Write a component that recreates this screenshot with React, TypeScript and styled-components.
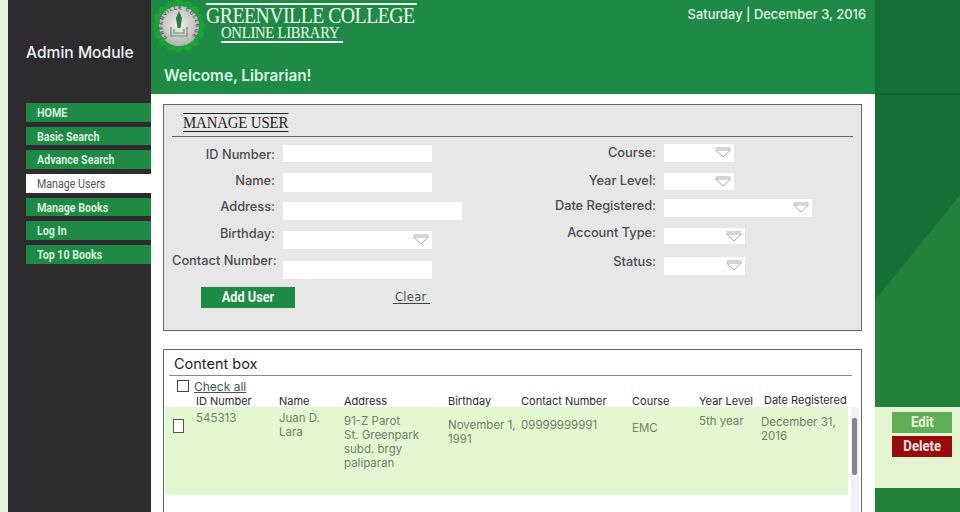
import styled, { createGlobalStyle } from 'styled-components'

const sans = `'Inter', 'Liberation Sans', sans-serif`
const narrow = `'Roboto', 'Liberation Sans', sans-serif`
const serif = `'Liberation Serif', serif`

const GlobalStyle = createGlobalStyle`
  html, body {
    margin: 0;
    padding: 0;
    height: 512px;
    overflow: hidden;
    background: #e6f0df;
  }
`

const NAV_ITEMS = ['HOME', 'Basic Search', 'Advance Search', 'Manage Users', 'Manage Books', 'Log In', 'Top 10 Books']

const LEFT_FIELDS = [
  { label: 'ID Number:', width: 149, height: 17, gap: 0, labelUp: -1 },
  { label: 'Name:', width: 149, height: 19, gap: 11, labelUp: 1 },
  { label: 'Address:', width: 179, height: 18, gap: 10, labelUp: 4 },
  { label: 'Birthday:', width: 149, height: 18, gap: 11, labelUp: 6, select: true },
  { label: 'Contact Number:', width: 149, height: 18, gap: 12, labelUp: 9 },
]

const RIGHT_FIELDS = [
  { label: 'Course:', width: 70, height: 18, gap: 0, labelUp: 0, select: true },
  { label: 'Year Level:', width: 70, height: 17, gap: 11, labelUp: 1, select: true },
  { label: 'Date Registered:', width: 148, height: 18, gap: 9, labelUp: 2, select: true },
  { label: 'Account Type:', width: 81, height: 16, gap: 11, labelUp: 4, select: true },
  { label: 'Status:', width: 81, height: 18, gap: 12, labelUp: 4, select: true },
]

type Field = { label: string; width: number; height: number; gap: number; labelUp: number; select?: boolean }

function Arrow() {
  return (
    <ArrowIcon width="16" height="11" viewBox="0 0 16 11">
      <path d="M0.5 1 H15.5 M0.5 3 H15.5 L8 10 Z" fill="none" stroke="#a9aca9" strokeWidth="1" />
    </ArrowIcon>
  )
}

function FormColumn({ fields, labelWidth, lift = 0 }: { fields: Field[]; labelWidth: number; lift?: number }) {
  return (
    <Column $lift={lift}>
      {fields.map((f) => (
        <FieldRow key={f.label} $gap={f.gap}>
          <FieldLabel $width={labelWidth} $up={f.labelUp}>
            {f.label}
          </FieldLabel>
          <FieldInput $width={f.width} $height={f.height}>
            {f.select && <Arrow />}
          </FieldInput>
        </FieldRow>
      ))}
    </Column>
  )
}

function Logo() {
  const scallops = Array.from({ length: 16 }, (_, i) => {
    const a = (i / 16) * Math.PI * 2
    return { x: 26 + Math.cos(a) * 22, y: 26 + Math.sin(a) * 22 }
  })
  return (
    <LogoIcon width="54" height="54" viewBox="0 0 54 54">
      <defs>
        <radialGradient id="seal" cx="50%" cy="45%" r="55%">
          <stop offset="0%" stopColor="#f1f1ee" />
          <stop offset="100%" stopColor="#aeb2ad" />
        </radialGradient>
        <path id="ring" d="M14.2 37.8 A16.7 16.7 0 1 1 37.8 37.8" />
      </defs>
      {scallops.map((s, i) => (
        <circle key={i} cx={s.x} cy={s.y} r="4.4" fill="#17a534" />
      ))}
      <circle cx="26" cy="26" r="22" fill="#17a534" />
      <circle cx="26" cy="26" r="20.5" fill="url(#seal)" stroke="#3b6a45" strokeWidth="0.6" />
      <text fontFamily="'Liberation Sans', sans-serif" fontSize="5" fontWeight="700" fill="#3e5a46">
        <textPath href="#ring" textLength="76">
          GREENVILLE COLLEGE
        </textPath>
      </text>
      <path d="M18 27 V36 H34 V27 M21 29 V33 H31 V29" fill="none" stroke="#7b9180" strokeWidth="1.2" />
      <path d="M26 11 L29 18 L27.5 28 H24.5 L23 18 Z" fill="#2e7a45" />
    </LogoIcon>
  )
}

export default function App() {
  return (
    <>
      <GlobalStyle />
      <Page>
        <Gutter />
        <Sidebar>
          <ModuleTitle>Admin Module</ModuleTitle>
          <Nav>
            {NAV_ITEMS.map((item) => (
              <NavItem key={item} $active={item === 'Manage Users'}>
                <Squeeze $x={0.82}>{item}</Squeeze>
              </NavItem>
            ))}
          </Nav>
        </Sidebar>
        <Main>
          <Header>
            <BrandRow>
              <Logo />
              <Brand>
                <BrandName>
                  <Squeeze $x={0.84}>GREENVILLE COLLEGE</Squeeze>
                </BrandName>
                <BrandSub>
                  <Squeeze $x={0.89}>ONLINE LIBRARY</Squeeze>
                </BrandSub>
              </Brand>
              <DateText>Saturday | December 3, 2016</DateText>
            </BrandRow>
            <Welcome>Welcome, Librarian!</Welcome>
          </Header>
          <Body>
            <ManagePanel>
              <PanelHeading>
                <PanelTitle>MANAGE USER</PanelTitle>
              </PanelHeading>
              <FormGrid>
                <div>
                  <FormColumn fields={LEFT_FIELDS} labelWidth={111} />
                  <Actions>
                    <AddButton>
                      <Squeeze $x={0.85} $origin="center">
                        Add User
                      </Squeeze>
                    </AddButton>
                    <ClearLink>Clear</ClearLink>
                  </Actions>
                </div>
                <FormColumn fields={RIGHT_FIELDS} labelWidth={155} lift={1} />
              </FormGrid>
            </ManagePanel>
            <ContentPanel>
              <ContentTitle>Content box</ContentTitle>
              <CheckAllRow>
                <CheckBox />
                <CheckAll>Check all</CheckAll>
              </CheckAllRow>
              <TableHead>
                <span>ID Number</span>
                <span>Name</span>
                <span>Address</span>
                <span>Birthday</span>
                <span>Contact Number</span>
                <span>Course</span>
                <span>Year Level</span>
                <HeadCell $up={1}>Date Registered</HeadCell>
              </TableHead>
              <TableArea>
                <TableRow>
                  <RowCheck />
                  <Cell $top={4}>545313</Cell>
                  <Cell $top={4}>
                    Juan D.
                    <br />
                    Lara
                  </Cell>
                  <Cell $top={7}>
                    91-Z Parot
                    <br />
                    St. Greenpark
                    <br />
                    subd. brgy
                    <br />
                    paliparan
                  </Cell>
                  <Cell $top={11}>
                    November 1,
                    <br />
                    1991
                  </Cell>
                  <Cell $top={11}>09999999991</Cell>
                  <Cell $top={14}>EMC</Cell>
                  <Cell $top={7}>5th year</Cell>
                  <Cell $top={8} $shift={-3}>
                    December 31,
                    <br />
                    2016
                  </Cell>
                </TableRow>
                <ScrollTrack>
                  <ScrollThumb />
                </ScrollTrack>
              </TableArea>
            </ContentPanel>
          </Body>
        </Main>
        <RightRail>
          <RailTop />
          <ActionStrip>
            <EditButton>
              <Squeeze $x={0.85} $origin="center">
                Edit
              </Squeeze>
            </EditButton>
            <DeleteButton>
              <Squeeze $x={0.85} $origin="center">
                Delete
              </Squeeze>
            </DeleteButton>
          </ActionStrip>
        </RightRail>
      </Page>
    </>
  )
}

// the reference uses condensed faces that are not installed
const Squeeze = styled.span<{ $x: number; $origin?: string }>`
  display: inline-block;
  transform: scaleX(${(p) => p.$x});
  transform-origin: ${(p) => p.$origin ?? 'left'} center;
  white-space: nowrap;
`

const Page = styled.div`
  display: grid;
  grid-template-columns: 8px 143px 724px 85px;
  width: 960px;
  height: 512px;
  overflow: hidden;
`

const Gutter = styled.div`
  background: #e6f0df;
`

const Sidebar = styled.aside`
  background: #2d2b2d;
  padding-left: 18px;
`

const ModuleTitle = styled.div`
  margin-top: 43px;
  font: 500 15.6px/20px ${sans};
  color: #eef1f4;
  white-space: nowrap;
`

const Nav = styled.nav`
  display: flex;
  flex-direction: column;
  gap: 5.2px;
  margin-top: 40px;
`

const NavItem = styled.div<{ $active?: boolean }>`
  height: 18.5px;
  padding-left: 11px;
  font: ${(p) => (p.$active ? 400 : 700)} 13px/19.5px ${narrow};
  color: ${(p) => (p.$active ? '#555' : '#d8eedd')};
  background: ${(p) => (p.$active ? '#fff' : '#1f8a45')};
`

const Main = styled.main`
  display: flex;
  flex-direction: column;
  background: #fff;
  min-height: 0;
`

const Header = styled.header`
  height: 94px;
  flex: none;
  background: #1f8a45;
`

const BrandRow = styled.div`
  display: flex;
  align-items: flex-start;
  height: 58px;
`

const LogoIcon = styled.svg`
  flex: none;
  margin-left: 2px;
  margin-right: -1px;
`

const Brand = styled.div`
  padding-top: 3px;
  color: #f2fbf3;
`

const BrandName = styled.div`
  width: 211px;
  border-top: 2px solid #f2fbf3;
  font: 400 23.5px/21px ${serif};
  letter-spacing: -0.6px;
`

const BrandSub = styled.div`
  width: 122px;
  height: 16px;
  margin: -1px 0 0 15px;
  border-bottom: 2px solid #f2fbf3;
  font: 400 16.5px/16px ${serif};
  letter-spacing: -0.3px;
`

const DateText = styled.div`
  margin-left: auto;
  margin-right: 9px;
  padding-top: 6px;
  font: 500 12.9px/18px ${sans};
  color: #e3f4e6;
  white-space: nowrap;
`

const Welcome = styled.div`
  padding: 8px 0 0 13px;
  font: 600 15.3px/20px ${sans};
  color: #d8f6e2;
`

const Body = styled.div`
  padding: 10px 13px 0 12px;
`

const ManagePanel = styled.section`
  box-sizing: border-box;
  height: 227px;
  padding: 8px 8px 0;
  background: #e8e7e8;
  border: 1px solid #666;
`

const PanelHeading = styled.div`
  height: 23px;
  padding-left: 11px;
  border-bottom: 1px solid #666;
`

const PanelTitle = styled.span`
  display: inline-block;
  border-top: 1px solid #222;
  border-bottom: 1px solid #222;
  font: 400 17.5px/17px ${serif};
  color: #1d1d1d;
  letter-spacing: -0.2px;
  transform: scaleX(0.85);
  transform-origin: left center;
`

const FormGrid = styled.div`
  display: grid;
  grid-template-columns: 337px 1fr;
  padding-top: 8px;
`

const Column = styled.div<{ $lift: number }>`
  display: flex;
  flex-direction: column;
  margin-top: ${(p) => -p.$lift}px;
`

const FieldRow = styled.div<{ $gap: number }>`
  display: flex;
  align-items: flex-start;
  margin-top: ${(p) => p.$gap}px;
`

const FieldLabel = styled.div<{ $width: number; $up: number }>`
  box-sizing: border-box;
  width: ${(p) => p.$width}px;
  padding-right: 8px;
  transform: translateY(${(p) => -p.$up}px);
  text-align: right;
  font: 500 12.8px/17px ${sans};
  color: #4b4b4d;
  white-space: nowrap;
`

const FieldInput = styled.div<{ $width: number; $height: number }>`
  position: relative;
  flex: none;
  width: ${(p) => p.$width}px;
  height: ${(p) => p.$height}px;
  background: #fff;
`

const ArrowIcon = styled.svg`
  position: absolute;
  top: 3px;
  right: 3px;
`

const Actions = styled.div`
  display: flex;
  align-items: center;
  margin: 8px 0 0 29px;
`

const AddButton = styled.button`
  width: 94px;
  height: 21px;
  padding: 0;
  border: 0;
  background: #1f8a45;
  color: #eef8ee;
  font: 700 15px/21px ${narrow};
`

const ClearLink = styled.a`
  margin-left: 98px;
  padding: 0 3px 0 2px;
  border-bottom: 1px solid #33483a;
  font: 400 11.5px/12px 'DejaVu Sans', sans-serif;
  letter-spacing: 0.3px;
  color: #3e5446;
`

const ContentPanel = styled.section`
  box-sizing: border-box;
  height: 200px;
  margin-top: 18px;
  padding: 0 1px;
  background: #fff;
  border: 1px solid #666;
`

const ContentTitle = styled.h2`
  box-sizing: border-box;
  width: 683px;
  height: 26px;
  margin: 0 0 0 4px;
  padding: 5px 0 0 5px;
  border-bottom: 1px solid #888;
  font: 400 14.5px/18px ${sans};
  color: #1f1f1f;
`

const CheckAllRow = styled.div`
  display: flex;
  align-items: center;
  height: 15px;
  margin-top: 2px;
  padding-left: 12px;
`

const CheckBox = styled.span`
  box-sizing: border-box;
  width: 12px;
  height: 12px;
  border: 1px solid #444;
  background: #fff;
`

const CheckAll = styled.a`
  margin-left: 5px;
  padding-top: 2px;
  font: 400 12px/13px ${sans};
  text-decoration: underline;
  color: #3d5c49;
`

const headColumns = '31px 83px 65px 104px 73px 111px 67px 65px 84px'

const TableHead = styled.div`
  position: relative;
  z-index: 1;
  display: grid;
  grid-template-columns: ${headColumns};
  height: 12px;
  padding-top: 1px;
  margin-bottom: 1px;
  font: 400 11px/14px ${sans};
  color: #2b2b2b;
  white-space: nowrap;
  & > span:first-child {
    grid-column: 2;
  }
`

const HeadCell = styled.span<{ $up: number }>`
  transform: translateY(${(p) => -p.$up}px);
`

const TableArea = styled.div`
  display: flex;
  align-items: flex-start;
`

const TableRow = styled.div`
  display: grid;
  grid-template-columns: ${headColumns};
  width: 683px;
  height: 88px;
  background: #e3f7d0;
  font: 400 11.5px/14px ${sans};
  color: #6b8268;
  white-space: nowrap;
`

const RowCheck = styled.span`
  box-sizing: border-box;
  display: block;
  width: 11px;
  height: 14px;
  margin: 12px 0 0 8px;
  background: #fff;
  border: 1px solid #555;
`

const Cell = styled.div<{ $top: number; $shift?: number }>`
  margin-top: ${(p) => p.$top}px;
  margin-left: ${(p) => p.$shift ?? 0}px;
`

const ScrollTrack = styled.div`
  width: 8px;
  height: 105px;
  margin-left: 3px;
  padding-top: 11px;
  background: #f0f0f4;
`

const ScrollThumb = styled.div`
  width: 5px;
  height: 57px;
  margin-left: 1px;
  border-radius: 2px;
  background: #85858c;
`

const RightRail = styled.div`
  position: relative;
  display: flex;
  flex-direction: column;
  background: #166f37;

  &::before {
    content: '';
    position: absolute;
    inset: 0;
    background: #22813a;
    clip-path: polygon(0 300px, 85px 195px, 85px 100%, 0 100%);
  }
`

const RailTop = styled.div`
  position: relative;
  height: 313px;
  box-sizing: border-box;
  background: linear-gradient(#157038 0 93px, #0f6430 93px 95px, transparent 95px);
  margin-bottom: 94px;
`

const ActionStrip = styled.div`
  position: relative;
  display: flex;
  flex-direction: column;
  gap: 3px;
  align-items: flex-end;
  height: 81px;
  box-sizing: border-box;
  padding: 5px 8px 0 0;
  background: #e3f5d0;
`

const EditButton = styled.button`
  width: 60px;
  height: 21px;
  padding: 0;
  border: 0;
  background: #62ad58;
  color: #e4f3df;
  font: 700 15.5px/21px ${narrow};
`

const DeleteButton = styled(EditButton)`
  background: #980b0b;
  color: #f8e8e4;
`
